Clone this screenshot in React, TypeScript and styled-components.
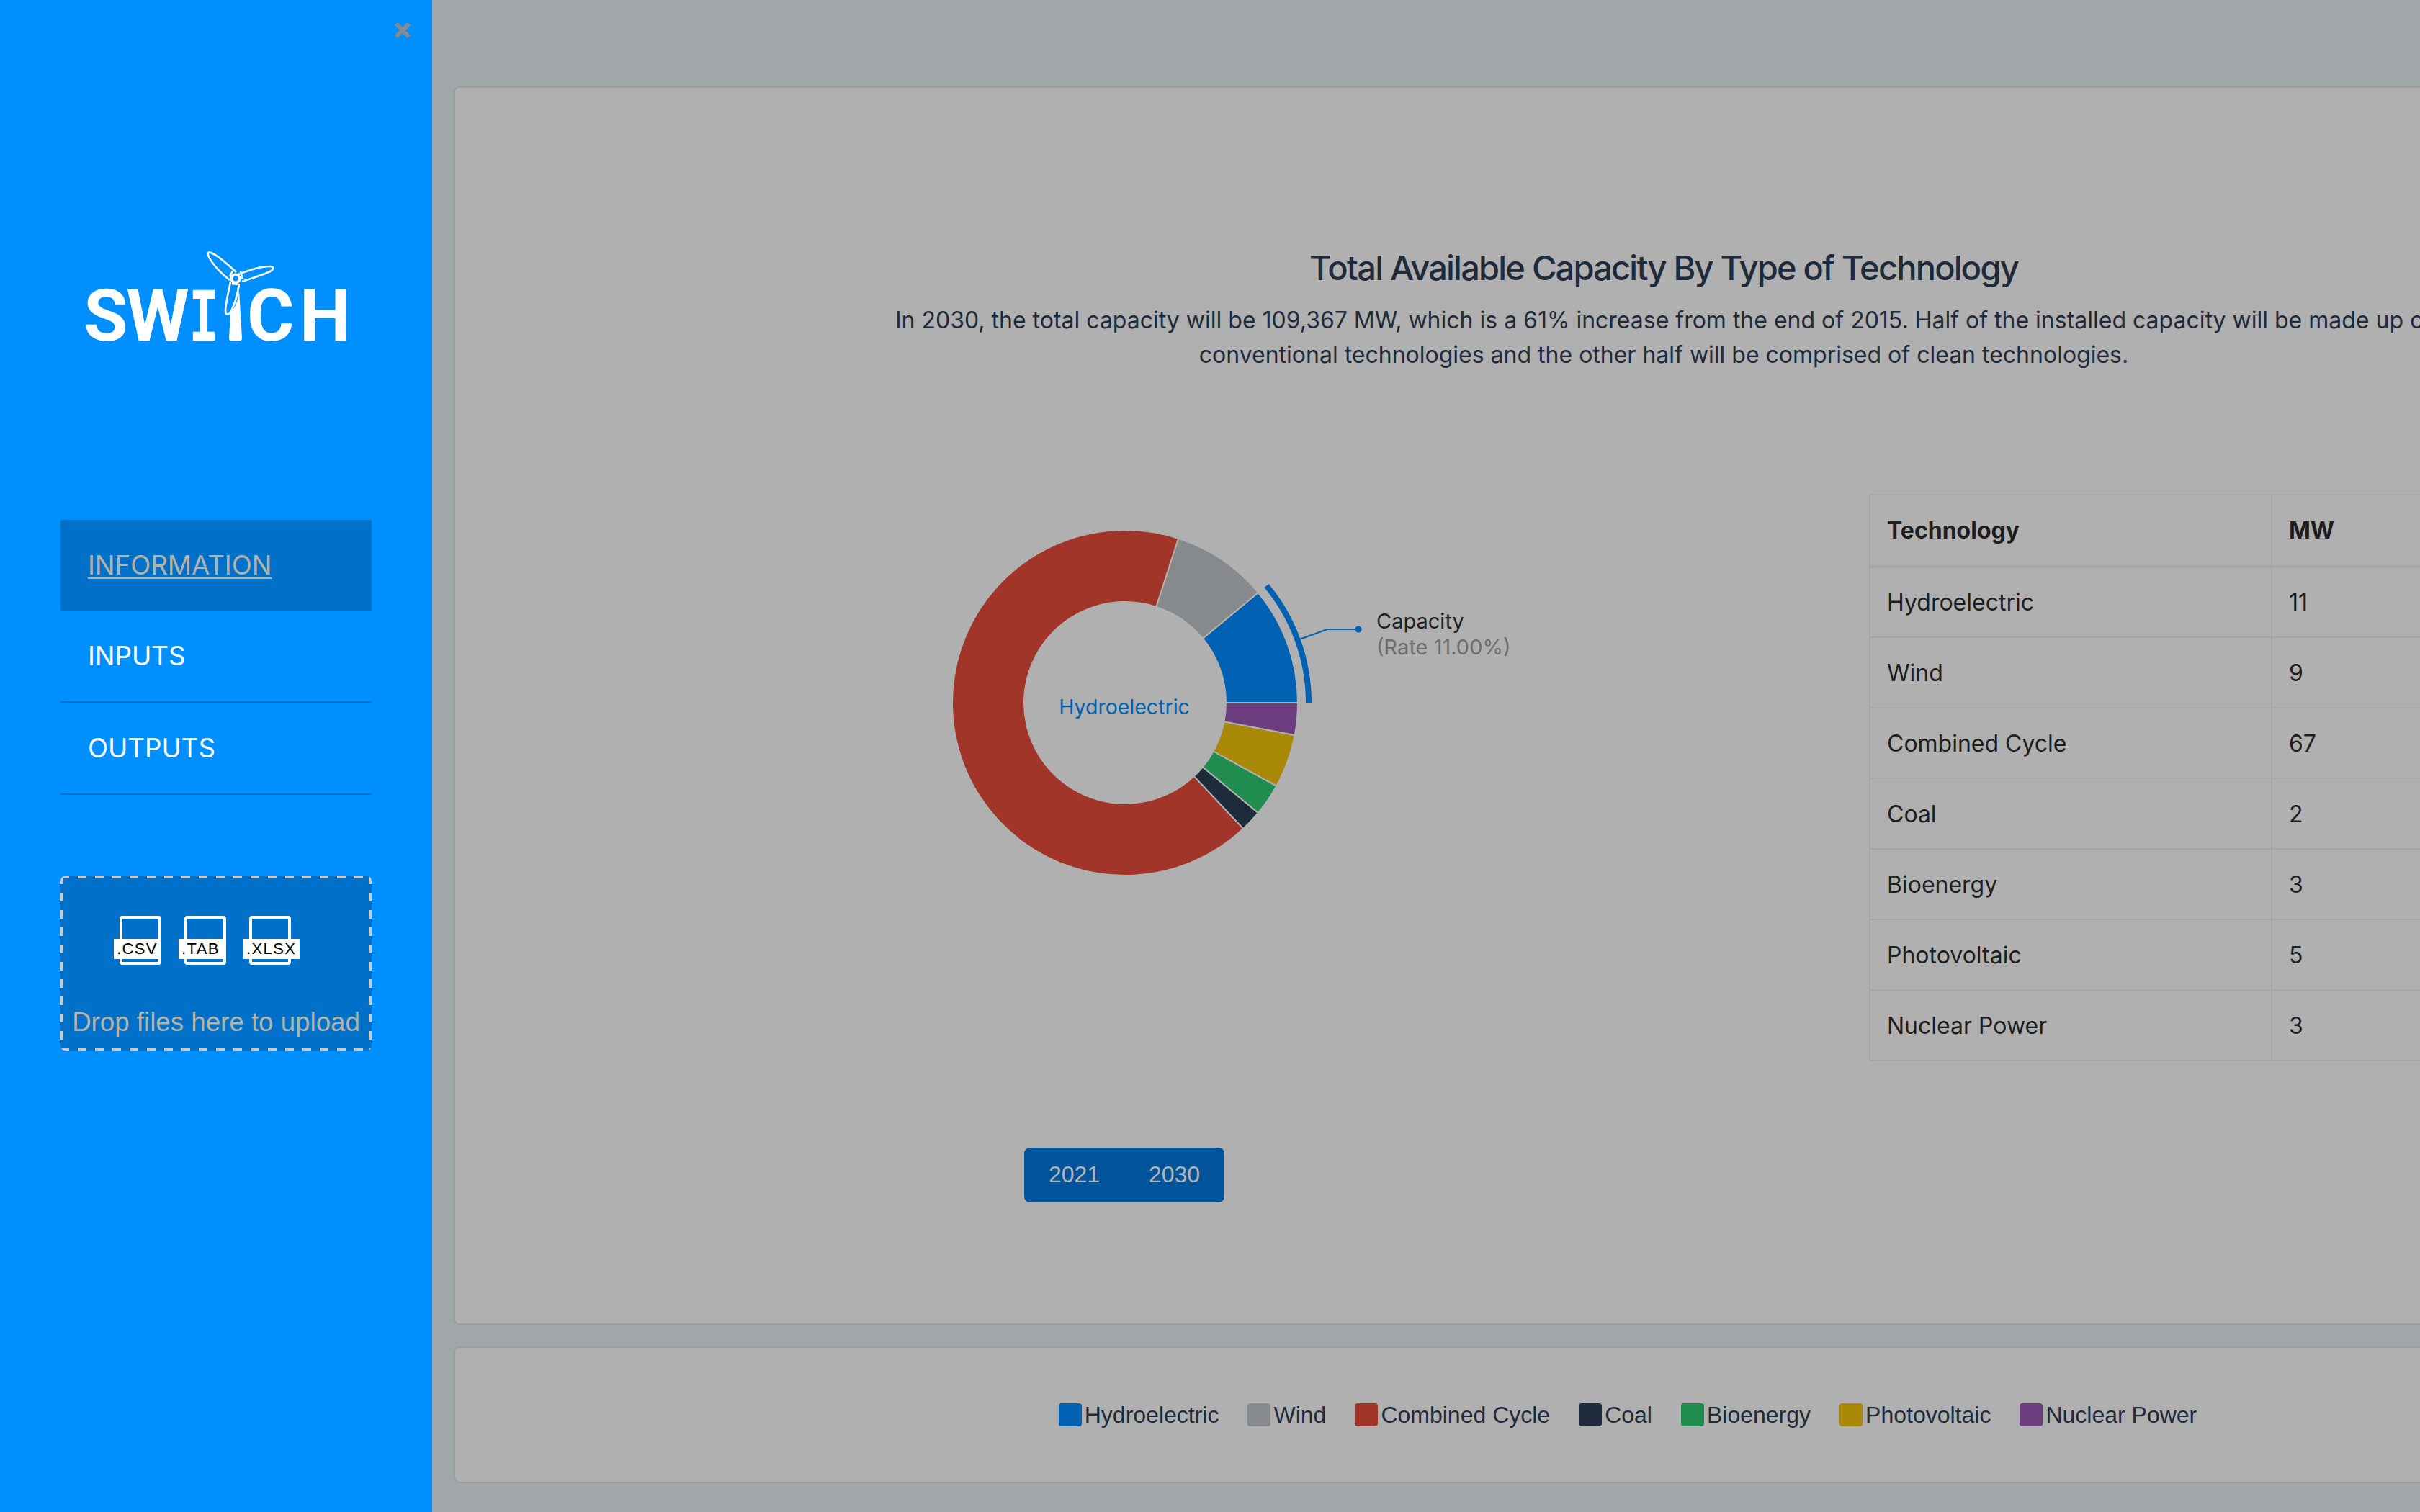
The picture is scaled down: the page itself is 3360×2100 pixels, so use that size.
import React from "react";
import styled, { createGlobalStyle } from "styled-components";

const Global = createGlobalStyle`
  html, body { margin: 0; padding: 0; width: 3360px; height: 2100px; overflow: hidden; background: #a1a6a9; }
  * { box-sizing: border-box; }
`;

const Page = styled.div`
  display: flex;
  width: 3360px;
  height: 2100px;
  overflow: hidden;
  font-family: Inter, "Liberation Sans", sans-serif;
`;

const Sidebar = styled.aside`
  position: relative;
  flex: 0 0 600px;
  width: 600px;
  min-width: 0;
  height: 2100px;
  padding: 389px 84px 0;
  background: #008fff;
`;

const CloseButton = styled.svg`
  position: absolute;
  top: 30px;
  left: 547px;
  width: 24px;
  height: 24px;
`;

const Logo = styled.div`
  position: relative;
  display: flex;
  align-items: baseline;
  width: 364px;
  height: 100px;
  margin: 0 0 233px 32px;
  color: #fff;
  line-height: 100px;
`;

const LogoLetter = styled.span<{ $width: number; $after: number }>`
  flex: 0 0 ${(p) => p.$width}px;
  min-width: 0;
  margin-right: ${(p) => p.$after}px;
  font-family: Roboto, sans-serif;
  font-weight: 700;
  font-size: 100px;
  text-align: center;
`;

const LogoSerifLetter = styled.span`
  display: flex;
  justify-content: center;
  flex: 0 0 30px;
  min-width: 0;
  margin: 0 45px 0 4px;
  font-family: "DejaVu Sans Mono", monospace;
  font-weight: 700;
  font-size: 97px;
  transform: scaleX(0.72);
`;

const Turbine = styled.svg`
  position: absolute;
  left: 164px;
  top: -44px;
  width: 110px;
  height: 135px;
`;

const Nav = styled.nav`
  display: flex;
  flex-direction: column;
`;

const NavItem = styled.a<{ $active?: boolean }>`
  display: flex;
  align-items: center;
  height: ${(p) => (p.$active ? 126 : 128)}px;
  padding: 0 0 2px 38px;
  font-size: 36.7px;
  color: ${(p) => (p.$active ? "#b7b2a6" : "#fff")};
  background: ${(p) => (p.$active ? "#0070c8" : "transparent")};
  border-bottom: ${(p) => (p.$active ? "none" : "2px solid #0070c8")};
  text-decoration: ${(p) => (p.$active ? "underline" : "none")};
  text-decoration-thickness: 2px;
  text-underline-offset: 4px;
`;

const DropZone = styled.div`
  display: flex;
  flex-direction: column;
  align-items: flex-start;
  width: 432px;
  height: 244px;
  margin-top: 112px;
  padding: 56px 0 0 82px;
  border-radius: 8px;
  background-color: #0070c8;
  background-image:
    linear-gradient(to right, #c9c9c9 50%, transparent 50%),
    linear-gradient(to right, #c9c9c9 50%, transparent 50%),
    linear-gradient(to bottom, #c9c9c9 50%, transparent 50%),
    linear-gradient(to bottom, #c9c9c9 50%, transparent 50%);
  background-size: 24px 4px, 24px 4px, 4px 24px, 4px 24px;
  background-position: 0 0, 0 100%, 0 0, 100% 0;
  background-repeat: repeat-x, repeat-x, repeat-y, repeat-y;
`;

const FileRow = styled.div`
  display: flex;
  gap: 32px;
`;

const FileIcon = styled.div`
  position: relative;
  width: 58px;
  height: 68px;
  border: 4px solid #fff;
  border-radius: 4px;
`;

const FileLabel = styled.span`
  position: absolute;
  left: -12px;
  top: 28px;
  min-width: 66px;
  height: 28px;
  padding: 0 5px 0 4px;
  background: #fff;
  color: #000;
  font-family: "Liberation Sans", Arial, sans-serif;
  font-size: 22px;
  line-height: 28px;
  letter-spacing: 1.4px;
  white-space: nowrap;
`;

const DropText = styled.div`
  align-self: stretch;
  margin: 58px 0 0 -82px;
  color: #b5b2a8;
  font-family: "Liberation Sans", Arial, sans-serif;
  font-size: 36.7px;
  line-height: 44px;
  text-align: center;
  white-space: nowrap;
`;

const Main = styled.main`
  flex: 1 1 auto;
  min-width: 0;
  padding: 120px 0 0 30px;
  overflow: hidden;
  background: #a1a6a9;
`;

const Card = styled.section<{ $height: number }>`
  width: 3360px;
  height: ${(p) => p.$height}px;
  border: 2px solid #9d9d9d;
  border-radius: 8px;
  background: #b0b0b0;
`;

const ChartCard = styled(Card)`
  padding-top: 220px;
  margin-bottom: 30px;
`;

const Title = styled.h2`
  margin: 0 0 19px;
  color: #1f2b3a;
  font-size: 47px;
  font-weight: 500;
  line-height: 60px;
  letter-spacing: -1.8px;
  text-align: center;
`;

const Lead = styled.p`
  width: 2220px;
  margin: 0 auto;
  color: #1f2b3a;
  font-size: 32px;
  line-height: 48px;
  text-align: center;
`;

const Columns = styled.div`
  display: grid;
  grid-template-columns: 1860px 1100px;
  column-gap: 103px;
  margin-top: 163px;
`;

const ChartColumn = styled.div`
  display: flex;
  flex-direction: column;
  align-items: center;
`;

const ChartSvg = styled.svg`
  display: block;
  flex: none;
  width: 1200px;
  height: 600px;
`;

const ButtonGroup = styled.div`
  display: flex;
  margin-top: 314px;
  margin-left: -2px;
  border-radius: 8px;
  overflow: hidden;
  background: #01549a;
`;

const YearButton = styled.button`
  width: 139px;
  height: 76px;
  padding: 0 0 2px;
  border: 0;
  background: transparent;
  color: #b3b3b3;
  font-family: "Liberation Sans", Arial, sans-serif;
  font-size: 32px;
`;

const DataTable = styled.table`
  width: 1100px;
  margin-top: 6px;
  border-collapse: collapse;
  table-layout: fixed;
  color: #1e1e1e;
  font-size: 32px;
  align-self: start;
`;

const HeadCell = styled.th<{ $width?: number }>`
  width: ${(p) => (p.$width ? `${p.$width}px` : "auto")};
  height: 100px;
  padding: 0 23px;
  border: 2px solid #a6a6a6;
  border-bottom-width: 4px;
  font-weight: 700;
  text-align: left;
`;

const Cell = styled.td`
  height: 98px;
  padding: 0 23px;
  border: 2px solid #a6a6a6;
`;

const LegendCard = styled(Card)`
  display: flex;
  align-items: center;
  justify-content: center;
  padding: 0 100px 0 0;
  gap: 40px;
`;

const LegendItem = styled.div`
  display: flex;
  align-items: center;
  gap: 4px;
  color: #1f2b3a;
  font-family: "Liberation Sans", Arial, sans-serif;
  font-size: 32px;
  white-space: nowrap;
`;

const Swatch = styled.span<{ $color: string }>`
  width: 32px;
  height: 32px;
  border-radius: 4px;
  background: ${(p) => p.$color};
`;

const series = [
  { name: "Hydroelectric", mw: 11, color: "#0060b2" },
  { name: "Wind", mw: 9, color: "#868a8c" },
  { name: "Combined Cycle", mw: 67, color: "#a1352a" },
  { name: "Coal", mw: 2, color: "#1e2b3a" },
  { name: "Bioenergy", mw: 3, color: "#218c50" },
  { name: "Photovoltaic", mw: 5, color: "#a98808" },
  { name: "Nuclear Power", mw: 3, color: "#6c3d7e" },
];

const CX = 600;
const CY = 296;
const OUTER = 240;
const INNER = 140;

const point = (r: number, deg: number) => {
  const a = (deg * Math.PI) / 180;
  return `${(CX + r * Math.cos(a)).toFixed(2)} ${(CY - r * Math.sin(a)).toFixed(2)}`;
};

const sector = (r0: number, r1: number, from: number, to: number) => {
  const large = to - from > 180 ? 1 : 0;
  return `M${point(r1, from)} A${r1} ${r1} 0 ${large} 0 ${point(r1, to)} L${point(r0, to)} A${r0} ${r0} 0 ${large} 1 ${point(r0, from)} Z`;
};

const slices = series.reduce<{ color: string; name: string; from: number; to: number }[]>((acc, s) => {
  const from = acc.length ? acc[acc.length - 1].to : 0;
  acc.push({ color: s.color, name: s.name, from, to: from + s.mw * 3.6 });
  return acc;
}, []);

export default function App() {
  return (
    <Page>
      <Global />
      <Sidebar>
        <CloseButton viewBox="0 0 24 24">
          <path d="M3 3 L21 21 M21 3 L3 21" stroke="#8a8a8a" strokeWidth="6" fill="none" />
        </CloseButton>
        <Logo>
          <LogoLetter $width={54} $after={4}>S</LogoLetter>
          <LogoLetter $width={90} $after={0}>W</LogoLetter>
          <LogoSerifLetter>I</LogoSerifLetter>
          <LogoLetter $width={65} $after={8}>C</LogoLetter>
          <LogoLetter $width={64} $after={0}>H</LogoLetter>
          <Turbine viewBox="280 345 110 135">
            <path fill="#fff" d="M320 434 L318 470 Q318 473 321 473 L333 473 Q336 473 336 470 L332 403 L330 415 Q327 427 320 434 Z" />
            <g fill="none" stroke="#fff" strokeWidth="2.6">
              <path d="M320 392 C316 410 313 425 313 432 C313 438 318 438 321 432 C327 420 330 408 332 394" />
              <path d="M328 378 C315 366 301 354 293 351 C288 349 288 353 290 357 C296 368 308 381 319 389" />
              <path d="M331 381 C346 375 362 370 375 370 C381 370 380 375 375 377 C362 383 348 387 336 391" />
              <path d="M323 376 L319 384 M334 377 L337 388 M322 394 L331 395" />
            </g>
            <circle cx="327" cy="387" r="5.5" fill="#008fff" stroke="#fff" strokeWidth="4" />
          </Turbine>
        </Logo>
        <Nav>
          <NavItem $active>INFORMATION</NavItem>
          <NavItem>INPUTS</NavItem>
          <NavItem>OUTPUTS</NavItem>
        </Nav>
        <DropZone>
          <FileRow>
            <FileIcon><FileLabel>.CSV</FileLabel></FileIcon>
            <FileIcon><FileLabel>.TAB</FileLabel></FileIcon>
            <FileIcon><FileLabel>.XLSX</FileLabel></FileIcon>
          </FileRow>
          <DropText>Drop files here to upload</DropText>
        </DropZone>
      </Sidebar>
      <Main>
        <ChartCard $height={1720}>
          <Title>Total Available Capacity By Type of Technology</Title>
          <Lead>
            In 2030, the total capacity will be 109,367 MW, which is a 61% increase from the end of 2015. Half of the
            installed capacity will be made up of conventional technologies and the other half will be comprised of
            clean technologies.
          </Lead>
          <Columns>
            <ChartColumn>
              <ChartSvg viewBox="0 0 1200 600">
                {slices.map((s) => (
                  <path key={s.name} d={sector(INNER, OUTER, s.from, s.to)} fill={s.color} stroke="#b0b0b0" strokeWidth="2" />
                ))}
                <path d={sector(251, 259, 0, 39.6)} fill="#0060b2" />
                <path d="M843.5 207.5 L881 194 L924 194" fill="none" stroke="#0060b2" strokeWidth="2" />
                <circle cx="924" cy="194" r="4.5" fill="#0060b2" />
                <text x="599" y="312" textAnchor="middle" fontSize="28.5" fill="#0060b2">Hydroelectric</text>
                <text x="949" y="193" fontSize="29" fill="#1f1f1f">Capacity</text>
                <text x="949" y="229" fontSize="29" fill="#6e6e6e">(Rate 11.00%)</text>
              </ChartSvg>
              <ButtonGroup>
                <YearButton>2021</YearButton>
                <YearButton>2030</YearButton>
              </ButtonGroup>
            </ChartColumn>
            <DataTable>
              <thead>
                <tr>
                  <HeadCell $width={558}>Technology</HeadCell>
                  <HeadCell>MW</HeadCell>
                </tr>
              </thead>
              <tbody>
                {series.map((s) => (
                  <tr key={s.name}>
                    <Cell>{s.name}</Cell>
                    <Cell>{s.mw}</Cell>
                  </tr>
                ))}
              </tbody>
            </DataTable>
          </Columns>
        </ChartCard>
        <LegendCard $height={190}>
          {series.map((s) => (
            <LegendItem key={s.name}>
              <Swatch $color={s.color} />
              {s.name}
            </LegendItem>
          ))}
        </LegendCard>
      </Main>
    </Page>
  );
}
